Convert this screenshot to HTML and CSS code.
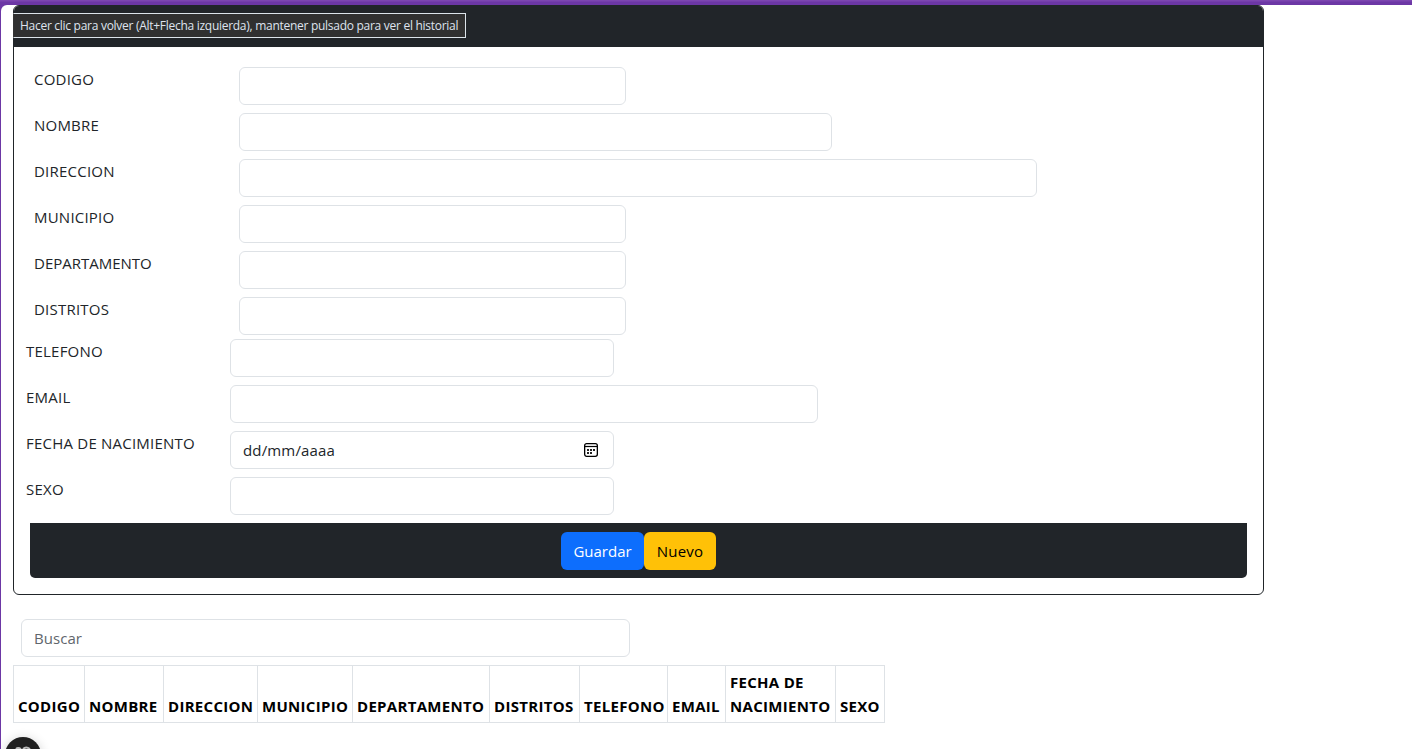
FILE: index.html
```html
<!DOCTYPE html>
<html lang="es">
<head>
<meta charset="utf-8">
<title>Registro</title>
<link rel="stylesheet" href="styles.css">
</head>
<body>
<div class="page">
  <section class="card">
    <div class="card-header"></div>
    <form class="card-body">
      <div class="group">
        <div class="row"><label>CODIGO</label><div class="control w-md"></div></div>
        <div class="row"><label>NOMBRE</label><div class="control w-lg"></div></div>
        <div class="row"><label>DIRECCION</label><div class="control w-xl"></div></div>
        <div class="row"><label>MUNICIPIO</label><div class="control w-md"></div></div>
        <div class="row"><label class="tight">DEPARTAMENTO</label><div class="control w-md"></div></div>
        <div class="row"><label>DISTRITOS</label><div class="control w-md"></div></div>
      </div>
      <div class="group outer">
        <div class="row"><label>TELEFONO</label><div class="control w-md"></div></div>
        <div class="row"><label>EMAIL</label><div class="control w-lg"></div></div>
        <div class="row"><label>FECHA DE NACIMIENTO</label><div class="control w-md date"><span class="date-text">dd/mm/aaaa</span>
          <svg class="calendar" width="16" height="16" viewBox="0 0 16 16"><rect x="1.65" y="1.65" width="12.7" height="12.7" rx="2" fill="none" stroke="#000" stroke-width="1.3"/><path d="M1.5 4.5h13" stroke="#000" stroke-width="1.2"/><path d="M7 7h2v2H7zM10 7h2v2h-2zM4 7h2v2H4zM4 10h2v2H4zM7 10h2v2H7z" fill="#222"/></svg></div></div>
        <div class="row"><label>SEXO</label><div class="control w-md"></div></div>
      </div>
      <div class="card-footer"><button type="button" class="btn save">Guardar</button><button type="button" class="btn new">Nuevo</button></div>
    </form>
  </section>
  <div class="control search">Buscar</div>
  <table>
    <colgroup><col class="c1"><col class="c2"><col class="c3"><col class="c4"><col class="c5"><col class="c6"><col class="c7"><col class="c8"><col class="c9"><col class="c10"></colgroup>
    <thead><tr><th>CODIGO</th><th>NOMBRE</th><th>DIRECCION</th><th>MUNICIPIO</th><th>DEPARTAMENTO</th><th>DISTRITOS</th><th>TELEFONO</th><th>EMAIL</th><th>FECHA DE<br>NACIMIENTO</th><th>SEXO</th></tr></thead>
  </table>
</div>
<div class="tooltip">Hacer clic para volver (Alt+Flecha izquierda), mantener pulsado para ver el historial</div>
<div class="fab"><svg width="36" height="36" viewBox="0 0 36 36"><path d="M11 12q2-2 5 0M18 12q3-3 7 0" fill="none" stroke="#bbb" stroke-width="2"/></svg></div>
</body>
</html>
```
FILE: styles.css
```css
* { box-sizing: border-box; }
body {
  margin: 0;
  height: 749px;
  overflow: hidden;
  position: relative;
  padding: 5px 0 0 1px;
  background: linear-gradient(#7c46b0 0, #7c46b0 1px, #6c37a5 2px, #6c37a5 100%);
  font: 15px/24px "Open Sans", "Noto Sans", sans-serif;
  letter-spacing: 0.05px;
  color: #212529;
}
.page {
  height: 744px;
  padding-left: 12px;
  background: #fff;
  border-top-left-radius: 6px;
}
.card {
  width: 1251px;
  height: 590px;
  border: 1px solid #212529;
  border-radius: 6px;
  overflow: hidden;
}
.card-header { height: 41px; background: #212529; }
.card-body { padding: 20px 16px 16px; }
.group { display: flex; flex-direction: column; gap: 8px; padding-left: 4px; }
.group.outer { margin: 4px 0 0 -8px; }
.row { display: grid; grid-template-columns: 205px 1fr; height: 38px; }
.outer .row { grid-template-columns: 204px 1fr; }
label { white-space: nowrap; letter-spacing: 0.22px; }
label.tight { letter-spacing: 0; }
.control {
  height: 38px;
  border: 1px solid #dee2e6;
  border-radius: 6px;
  padding: 6px 12px;
}
.w-md { width: 387px; }
.w-lg { width: 593px; }
.w-xl { width: 798px; }
.outer .w-md { width: 384px; }
.outer .w-lg { width: 588px; }
.date { display: flex; justify-content: space-between; align-items: center; padding-right: 14px; }
.date-text { letter-spacing: 0.15px; }
.card-footer {
  display: flex;
  justify-content: center;
  height: 55px;
  margin-top: 8px;
  padding-top: 9px;
  background: #212529;
  border-radius: 0 0 5px 5px;
}
.btn {
  height: 38px;
  padding: 0;
  border: 0;
  border-radius: 6px;
  font: inherit;
  letter-spacing: 0;
}
.save { width: 83px; color: #fff; background: #0d6efd; }
.new { width: 72px; color: #000; background: #ffc107; letter-spacing: 0.2px; }
.search { width: 609px; margin: 24px 0 8px 8px; color: #5f666c; }
table { width: 872px; height: 58px; border-collapse: collapse; table-layout: fixed; }
th {
  padding: 4px 0 4px 4px;
  border: 1px solid #dee2e6;
  text-align: left;
  vertical-align: bottom;
  white-space: nowrap;
  color: #000;
  font-weight: 700;
  letter-spacing: 0.3px;
}
.c1 { width: 71px; }
.c2 { width: 79px; }
.c3 { width: 94px; }
.c4 { width: 95px; }
.c5 { width: 137px; }
.c6 { width: 90px; }
.c7 { width: 88px; }
.c8 { width: 58px; }
.c9 { width: 110px; }
.c10 { width: 49px; }
.tooltip {
  position: absolute;
  left: 13px;
  top: 13px;
  width: 453px;
  height: 25px;
  padding-left: 6px;
  border: 1px solid #dce4ea;
  border-left-color: #333;
  background: #303030;
  color: #dfe3ee;
  font-size: 12px;
  line-height: 24px;
  letter-spacing: -0.28px;
  white-space: nowrap;
}
.fab {
  position: absolute;
  left: 5px;
  top: 737px;
  width: 36px;
  height: 36px;
  border-radius: 50%;
  background: #202020;
  box-shadow: 0 2px 12px #0003;
}
```
